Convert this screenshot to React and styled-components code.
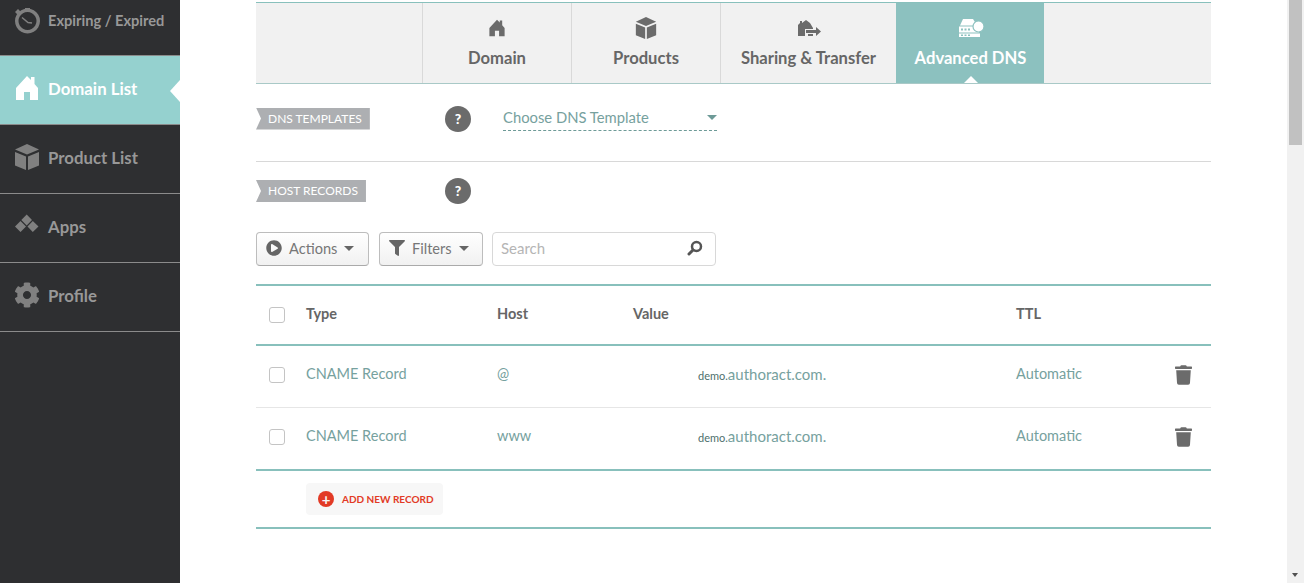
import React from 'react';
import styled, {createGlobalStyle} from 'styled-components';
import {FaCog, FaFilter, FaPlayCircle, FaTrash} from 'react-icons/fa';

const GlobalStyle = createGlobalStyle`
  html, body {
    margin: 0;
    height: 100%;
    overflow: hidden;
    background: #fff;
    font-family: Lato, "Open Sans", sans-serif;
  }
  * {
    box-sizing: border-box;
  }
`;

const Page = styled.div`
  display: flex;
  height: 583px;
  overflow: hidden;
`;

const Sidebar = styled.nav`
  flex: 0 0 180px;
  background: #2e2f31;
`;

const NavItem = styled.a`
  position: relative;
  display: flex;
  align-items: center;
  height: ${p => (p.$clipped ? '56px' : '69px')};
  padding: ${p => (p.$clipped ? '0 0 14px 14px' : '0 0 4px 14px')};
  gap: 8px;
  border-bottom: 1px solid #8b8b8b;
  background: ${p => (p.$active ? '#95d1cf' : 'transparent')};
  color: ${p => (p.$active ? '#fff' : '#989898')};
  font-size: ${p => (p.$clipped ? '14.6px' : '16.8px')};
  font-weight: 700;
  svg {
    flex: 0 0 26px;
    width: 26px;
    height: 26px;
    fill: ${p => (p.$active ? '#fff' : '#808080')};
    stroke: none;
  }
`;

const ActiveArrow = styled.span`
  position: absolute;
  right: 0;
  top: 24px;
  border-style: solid;
  border-width: 11px 10px 11px 0;
  border-color: transparent #fff transparent transparent;
`;

const Main = styled.main`
  flex: 1;
  padding: 2px 76px 0;
`;

const TabBar = styled.div`
  display: flex;
  height: 82px;
  background: #f1f1f1;
  border-top: 1px solid #88c0bc;
  border-bottom: 1px solid #a9c9c7;
`;

const TabSpacer = styled.div`
  width: 166px;
`;

const Tab = styled.a`
  position: relative;
  display: flex;
  flex-direction: column;
  align-items: center;
  width: ${p => p.$width}px;
  padding-top: 14px;
  border-left: 1px solid ${p => (p.$active ? '#8cc1bf' : '#d9d9d9')};
  background: ${p => (p.$active ? '#8cc1bf' : 'transparent')};
  color: ${p => (p.$active ? '#fff' : '#666')};
  font-size: 16.6px;
  font-weight: 700;
`;

const TabIcon = styled.span`
  display: flex;
  align-items: center;
  justify-content: center;
  height: 22px;
  margin-bottom: 9px;
  svg {
    width: ${p => p.$size}px;
    height: ${p => p.$size}px;
    fill: ${p => (p.$active ? '#fff' : '#6b6b6b')};
  }
`;

const TabArrow = styled.span`
  position: absolute;
  bottom: 0;
  left: 50%;
  margin-left: -7px;
  border-style: solid;
  border-width: 0 7px 7px;
  border-color: transparent transparent #fff;
`;

const SectionRow = styled.div`
  display: flex;
  align-items: center;
  height: ${p => p.$height}px;
  padding-bottom: ${p => p.$pad || 0}px;
  border-bottom: ${p => (p.$line ? '1px solid #d8d8d8' : 'none')};
`;

const LabelCol = styled.div`
  display: flex;
  flex: 0 0 189px;
`;

const Label = styled.span`
  height: 22px;
  line-height: 22px;
  padding: 0 8px 0 12px;
  background: #adafb2;
  color: #fff;
  font-size: 12px;
  clip-path: polygon(0 0, 100% 0, 100% 100%, 0 100%, 5px 50%);
`;

const Help = styled.span`
  flex: 0 0 26px;
  width: 26px;
  height: 26px;
  line-height: 26px;
  border-radius: 50%;
  background: #6b6b6b;
  color: #fff;
  font-size: 14px;
  font-weight: 900;
  text-align: center;
`;

const Select = styled.div`
  display: flex;
  align-items: center;
  justify-content: space-between;
  width: 214px;
  height: 24px;
  margin-left: 32px;
  padding-bottom: 2px;
  border-bottom: 1px dashed #6d9a97;
  color: #76a19e;
  font-size: 14.8px;
`;

const Caret = styled.span`
  display: inline-block;
  margin-right: ${p => p.$right || 0}px;
  border-style: solid;
  border-width: 5px 5.5px 0;
  border-color: ${p => p.$color || '#666'} transparent transparent;
`;

const Toolbar = styled.div`
  display: flex;
  height: 34px;
  margin-top: 12px;
`;

const ToolButton = styled.button`
  display: flex;
  align-items: center;
  width: ${p => p.$width}px;
  height: 34px;
  margin-right: ${p => p.$gap}px;
  padding: 0 0 2px 9px;
  gap: 7px;
  border: 1px solid #bdbdbd;
  border-bottom-color: #aaa;
  border-radius: 4px;
  background: linear-gradient(#fff, #f1f1f1);
  color: #777;
  font-family: inherit;
  font-size: 14.6px;
  svg {
    width: 16px;
    height: 16px;
    fill: #666;
  }
`;

const SearchBox = styled.div`
  display: flex;
  align-items: center;
  justify-content: space-between;
  width: 224px;
  height: 34px;
  padding: 0 12px 2px 8px;
  border: 1px solid #d8d8d8;
  border-radius: 4px;
  color: #b5b5b5;
  font-size: 15px;
  svg {
    width: 16px;
    height: 16px;
  }
`;

const Table = styled.div`
  margin-top: 18px;
  border-top: 2px solid #88c0bc;
`;

const Row = styled.div`
  display: grid;
  grid-template-columns: 37px 191px 136px 383px 155px 1fr;
  align-items: center;
  height: ${p => p.$height}px;
  padding: 0 0 ${p => (p.$head ? 0 : 4)}px 13px;
  border-bottom: ${p => (p.$strong ? '2px solid #88c0bc' : '1px solid #e6e6e6')};
  color: ${p => (p.$head ? '#666' : '#76a19e')};
  font-size: 14.5px;
  font-weight: ${p => (p.$head ? 700 : 400)};
`;

const Cell = styled.span`
  padding-bottom: ${p => (p.$head ? 4 : 2)}px;
`;

const Check = styled.span`
  width: 16px;
  height: 16px;
  border: 1px solid #c4c4c4;
  border-radius: 3px;
  background: #fff;
`;

const Value = styled(Cell)`
  padding-left: 65px;
  font-size: 15px;
`;

const Sub = styled.span`
  color: #4e6f6d;
  font-size: 11px;
`;

const Trash = styled(FaTrash)`
  width: 17px;
  height: 20px;
  margin-left: 4px;
  fill: #6b6b6b;
`;

const AddRow = styled.div`
  height: 58px;
  padding: 12px 0 0 50px;
  border-bottom: 2px solid #88c0bc;
`;

const AddButton = styled.a`
  display: inline-flex;
  align-items: center;
  width: 137px;
  height: 32px;
  padding-left: 12px;
  gap: 8px;
  border-radius: 4px;
  background: #f7f7f7;
  color: #e23a25;
  font-size: 10px;
  font-weight: 700;
`;

const AddIcon = styled.span`
  display: flex;
  align-items: center;
  justify-content: center;
  width: 16px;
  height: 16px;
  border-radius: 50%;
  background: #e23a25;
  color: #f7f7f7;
  font-size: 15px;
  line-height: 16px;
`;

const Scrollbar = styled.div`
  position: relative;
  flex: 0 0 17px;
  background: #f1f1f1;
`;

const Thumb = styled.div`
  width: 13px;
  height: 145px;
  margin-left: 2px;
  background: #c1c1c1;
`;

const ScrollDown = styled.span`
  position: absolute;
  left: 5px;
  bottom: 6px;
  border-style: solid;
  border-width: 4px 3.5px 0;
  border-color: #505050 transparent transparent;
`;

const HomeIcon = () => (
  <svg viewBox="0 0 26 26">
    <path d="M13 1 L17 5 V2 H20.500 V9 L24 13 V25 H16 V17 H10 V25 H2 V13 Z" />
  </svg>
);

const BoxIcon = () => (
  <svg viewBox="0 0 26 26">
    <path d="M1 8 L12 12.500 V26 L1 21.500 Z M14 12.500 L25 8 V21.500 L14 26 Z" />
    <path d="M13 0 L25 5.500 L13 10.500 L1 5.500 Z" />
  </svg>
);

const WatchIcon = () => (
  <svg viewBox="0 0 26 26">
    <path
      fillRule="evenodd"
      d="M13.500 .500 a12.500 12.500 0 1 0 .01 0 Z M13.500 4 a9 9 0 1 1 -.01 0 Z"
    />
    <path d="M11 -1 h5 v3 h-5 Z M1 4 L4 1 L6.500 3.500 L3.500 6.500 Z" />
    <path d="M8 9.500 L14 14.500 L18 15" fill="none" stroke="#808080" strokeWidth="1.500" />
  </svg>
);

const AppsIcon = () => (
  <svg viewBox="0 0 26 26">
    <path d="M12.700 1.500 L18 7 L12.700 12.500 L7.300 7 Z M6.500 8 L12 13.500 L6.500 19 L1 13.500 Z M18.800 8 L24.500 13.500 L18.800 19 L13.500 13.500 Z" />
  </svg>
);

const ShareIcon = () => (
  <svg viewBox="0 0 26 26">
    <path d="M10 5 L14 8 L17 13 V14 H9 V21 H2 V10 L4 8 V6 H6 V8 Z" />
    <path d="M10 15 H20 V12 L25 16.500 L20 21 V18 H10 Z" />
    <path d="M12 19 H17 V21 H12 Z" />
  </svg>
);

const DnsIcon = () => (
  <svg viewBox="0 0 26 26">
    <path d="M5 4 H15 L19 10.500 H2 Z" />
    <path
      fillRule="evenodd"
      d="M1 11.500 H21 V17.500 H1 Z M3 13.500 V15.500 H5 V13.500 Z M6.500 13.500 V15.500 H8.500 V13.500 Z M10 13.500 V15.500 H12 V13.500 Z"
    />
    <path
      fillRule="evenodd"
      d="M1 18.500 H22 V22 H1 Z M3 19.500 V21 H5 V19.500 Z M6.500 19.500 V21 H8.500 V19.500 Z M10 19.500 V21 H12 V19.500 Z"
    />
    <circle cx="20.500" cy="11.500" r="5.500" stroke="#8cc1bf" strokeWidth="1.200" />
  </svg>
);

const SearchIcon = () => (
  <svg viewBox="0 0 16 16">
    <circle cx="9.500" cy="6.500" r="4.500" fill="none" stroke="#555" strokeWidth="2.500" />
    <path d="M6 10 L2 14" stroke="#555" strokeWidth="3" strokeLinecap="round" />
  </svg>
);

const navItems = [
  {label: 'Expiring / Expired', icon: <WatchIcon />, clipped: true},
  {label: 'Domain List', icon: <HomeIcon />, active: true},
  {label: 'Product List', icon: <BoxIcon />},
  {label: 'Apps', icon: <AppsIcon />},
  {label: 'Profile', icon: <FaCog />},
];

const tabs = [
  {label: 'Domain', icon: <HomeIcon />, width: 149, size: 18},
  {label: 'Products', icon: <BoxIcon />, width: 149, size: 22},
  {label: 'Sharing & Transfer', icon: <ShareIcon />, width: 176, size: 26},
  {label: 'Advanced DNS', icon: <DnsIcon />, width: 148, size: 26, active: true},
];

const records = [
  {host: '@', sub: 'demo.'},
  {host: 'www', sub: 'demo.', strong: true},
];

const App = () => (
  <Page>
    <GlobalStyle />
    <Sidebar>
      {navItems.map(item => (
        <NavItem key={item.label} $active={item.active} $clipped={item.clipped}>
          {item.icon}
          {item.label}
          {item.active && <ActiveArrow />}
        </NavItem>
      ))}
    </Sidebar>
    <Main>
      <TabBar>
        <TabSpacer />
        {tabs.map(tab => (
          <Tab key={tab.label} $width={tab.width} $active={tab.active}>
            <TabIcon $size={tab.size} $active={tab.active}>
              {tab.icon}
            </TabIcon>
            {tab.label}
            {tab.active && <TabArrow />}
          </Tab>
        ))}
      </TabBar>
      <SectionRow $height={78} $pad={8} $line>
        <LabelCol>
          <Label>DNS TEMPLATES</Label>
        </LabelCol>
        <Help>?</Help>
        <Select>
          Choose DNS Template
          <Caret $color="#6d9a97" />
        </Select>
      </SectionRow>
      <SectionRow $height={58}>
        <LabelCol>
          <Label>HOST RECORDS</Label>
        </LabelCol>
        <Help>?</Help>
      </SectionRow>
      <Toolbar>
        <ToolButton $width={113} $gap={10}>
          <FaPlayCircle />
          Actions
          <Caret />
        </ToolButton>
        <ToolButton $width={104} $gap={9}>
          <FaFilter />
          Filters
          <Caret />
        </ToolButton>
        <SearchBox>
          Search
          <SearchIcon />
        </SearchBox>
      </Toolbar>
      <Table>
        <Row $head $strong $height={60}>
          <Check />
          <Cell $head>Type</Cell>
          <Cell $head>Host</Cell>
          <Cell $head>Value</Cell>
          <Cell $head>TTL</Cell>
          <span />
        </Row>
        {records.map(record => (
          <Row key={record.host} $strong={record.strong} $height={record.strong ? 63 : 62}>
            <Check />
            <Cell>CNAME Record</Cell>
            <Cell>{record.host}</Cell>
            <Value>
              <Sub>{record.sub}</Sub>authoract.com.
            </Value>
            <Cell>Automatic</Cell>
            <Trash />
          </Row>
        ))}
        <AddRow>
          <AddButton>
            <AddIcon>+</AddIcon>
            ADD NEW RECORD
          </AddButton>
        </AddRow>
      </Table>
    </Main>
    <Scrollbar>
      <Thumb />
      <ScrollDown />
    </Scrollbar>
  </Page>
);

export default App;
